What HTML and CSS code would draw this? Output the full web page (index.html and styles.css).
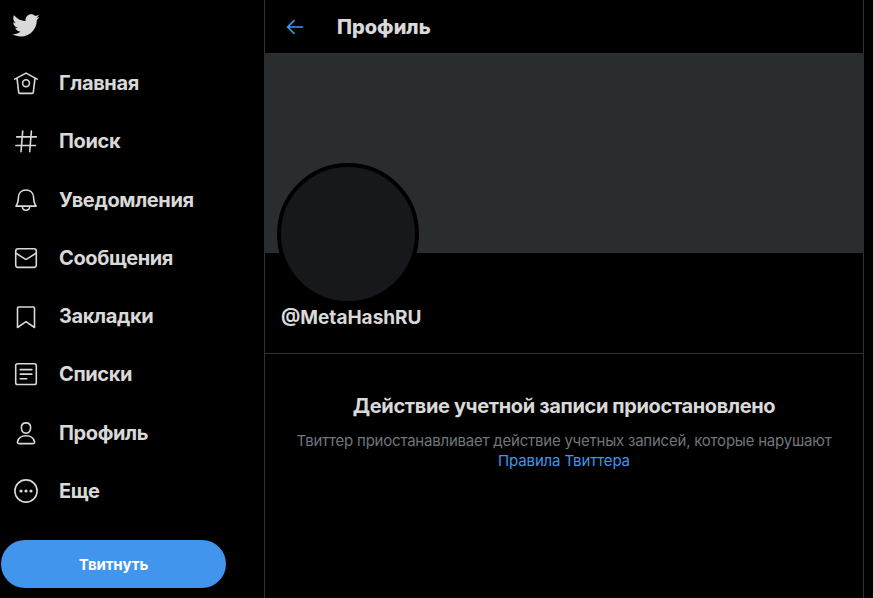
FILE: index.html
```html
<!DOCTYPE html>
<html lang="ru">
<head>
    <meta charset="UTF-8">
    <meta name="viewport" content="width=device-width, initial-scale=1.0">
    <title>Профиль</title>
    <link rel="stylesheet" href="styles.css">
</head>
<body>
    <div class="layout">
        <header class="sidebar">
            <a class="logo" href="#">
                <svg viewBox="0 0 24 24"><path d="M23.643 4.937c-.835.37-1.732.62-2.675.733.962-.576 1.7-1.49 2.048-2.578-.9.534-1.897.922-2.958 1.13-.85-.904-2.06-1.47-3.4-1.47-2.572 0-4.658 2.086-4.658 4.66 0 .364.042.718.12 1.06-3.873-.195-7.304-2.05-9.602-4.868-.4.69-.63 1.49-.63 2.342 0 1.616.823 3.043 2.072 3.878-.764-.025-1.482-.234-2.11-.583v.06c0 2.257 1.605 4.14 3.737 4.568-.392.106-.803.162-1.227.162-.3 0-.593-.028-.877-.082.593 1.85 2.313 3.198 4.352 3.234-1.595 1.25-3.604 1.995-5.786 1.995-.376 0-.747-.022-1.112-.065 2.062 1.323 4.51 2.093 7.14 2.093 8.57 0 13.255-7.098 13.255-13.254 0-.2-.005-.402-.014-.602.91-.658 1.7-1.477 2.323-2.41z"/></svg>
            </a>
            <nav class="menu">
                <a class="menu-item" href="#">
                    <svg viewBox="0 0 26 26"><path d="M1.8 9.1 13 3.1l11.2 6M4 8.2l1.7 14.2q.1 1 1.1 1h12.4q1 0 1.1-1L22 8.2"/><circle cx="13" cy="13.2" r="3.4"/></svg>
                    <span>Главная</span>
                </a>
                <a class="menu-item" href="#">
                    <svg viewBox="0 0 26 26"><path d="M3.7 8.9h19.6M2.9 17.5h19.6M9.7 3 8 23.8M18.4 3l-1.7 20.8"/></svg>
                    <span>Поиск</span>
                </a>
                <a class="menu-item" href="#">
                    <svg viewBox="0 0 26 26"><path d="M2.9 19.1c2.1-2.3 2.3-5.1 2.5-8.5C5.6 5.9 8.6 3 13 3s7.4 2.9 7.6 7.6c.2 3.4.4 6.2 2.5 8.5zM9.3 19.3c.1 2.5 1.6 4 3.7 4s3.6-1.5 3.7-4"/></svg>
                    <span>Уведомления</span>
                </a>
                <a class="menu-item" href="#">
                    <svg viewBox="0 0 26 26"><rect x="2.7" y="3.8" width="20.6" height="18.6" rx="2.3"/><path d="m3 8.3 9.3 5.8q.7.4 1.4 0L23 8.3"/></svg>
                    <span>Сообщения</span>
                </a>
                <a class="menu-item" href="#">
                    <svg viewBox="0 0 26 26"><path d="M4.5 24.5V5.3q0-1.3 1.3-1.3h14.4q1.3 0 1.3 1.3v19.2L13 18.7z"/></svg>
                    <span>Закладки</span>
                </a>
                <a class="menu-item" href="#">
                    <svg viewBox="0 0 26 26"><rect x="2.7" y="2.7" width="20.6" height="20.8" rx="1.8"/><path d="M7.2 8.6h11.7M7.2 13.1h11.7M7.2 17.7h6.5"/></svg>
                    <span>Списки</span>
                </a>
                <a class="menu-item" href="#">
                    <svg viewBox="0 0 26 26"><path d="M13 2.9c2.9 0 4.6 1.7 4.6 4.7 0 3.4-1.8 5.7-4.6 5.7s-4.6-2.3-4.6-5.7c0-3 1.7-4.7 4.6-4.7zM6 23.6c-1.2 0-1.8-.7-1.5-1.9.9-3.7 4.3-5.9 8.5-5.9s7.6 2.2 8.5 5.9c.3 1.2-.3 1.9-1.5 1.9z"/></svg>
                    <span>Профиль</span>
                </a>
                <a class="menu-item" href="#">
                    <svg viewBox="0 0 26 26"><circle cx="13" cy="13" r="11.1"/><g class="dots"><circle cx="8" cy="13" r="1.6"/><circle cx="13" cy="13" r="1.6"/><circle cx="18" cy="13" r="1.6"/></g></svg>
                    <span>Еще</span>
                </a>
            </nav>
            <button class="tweet-button">Твитнуть</button>
        </header>

        <main class="content">
            <div class="topbar">
                <svg class="back" viewBox="0 0 18 18"><path d="M16.5 9H1.8M8 2.7 1.7 9 8 15.3"/></svg>
                <h2>Профиль</h2>
            </div>
            <div class="cover"></div>
            <div class="user">
                <div class="avatar"></div>
                <div class="username">@MetaHashRU</div>
            </div>
            <div class="message">
                <h3>Действие учетной записи приостановлено</h3>
                <p>Твиттер приостанавливает действие учетных записей, которые нарушают <a href="#">Правила Твиттера</a></p>
            </div>
        </main>
    </div>
</body>
</html>
```
FILE: styles.css
```css
* {
    box-sizing: border-box;
}
body {
    margin: 0;
    background-color: #000;
    color: #d9d9d9;
    font-family: Inter, "Liberation Sans", sans-serif;
    overflow: hidden;
}
a {
    color: inherit;
    text-decoration: none;
}
h2, h3, p {
    margin: 0;
}
.layout {
    display: flex;
    height: 598px;
}
.sidebar {
    width: 264px;
    flex-shrink: 0;
}
.logo {
    display: block;
    height: 54px;
    padding: 11px 0 0 11px;
}
.logo svg {
    display: block;
    width: 29px;
    height: 29px;
    fill: #d9d9d9;
}
.menu-item {
    display: flex;
    align-items: center;
    gap: 20px;
    height: 58.25px;
    padding-left: 13px;
    font-size: 20px;
    font-weight: 700;
    letter-spacing: -0.38px;
}
.menu-item svg {
    width: 26px;
    height: 26px;
    fill: none;
    stroke: #d9d9d9;
    stroke-width: 1.6;
    stroke-linejoin: round;
    stroke-linecap: round;
}
.menu-item .dots {
    fill: #d9d9d9;
    stroke: none;
}
.tweet-button {
    display: block;
    width: 225px;
    height: 48px;
    margin: 20px 0 0 1px;
    border: 0;
    border-radius: 24px;
    background-color: #4195ed;
    color: #fff;
    font-family: inherit;
    font-size: 15px;
    font-weight: 700;
    letter-spacing: -0.1px;
}
.content {
    width: 600px;
    border-left: 1px solid #2f3336;
    border-right: 1px solid #2f3336;
}
.topbar {
    display: flex;
    align-items: center;
    gap: 33px;
    height: 53px;
    padding-left: 21px;
}
.back {
    width: 18px;
    height: 18px;
    fill: none;
    stroke: #4195ed;
    stroke-width: 1.7;
    stroke-linecap: round;
}
.topbar h2 {
    font-size: 20px;
    font-weight: 800;
}
.cover {
    height: 200px;
    margin: 0 -1px;
    background-color: #2a2d2f;
}
.user {
    display: flow-root;
    height: 101px;
    padding-left: 12px;
    border-bottom: 1px solid #2f3336;
}
.avatar {
    width: 142px;
    height: 142px;
    margin-top: -90px;
    border: 4px solid #000;
    border-radius: 50%;
    background-color: #17181c;
}
.username {
    padding-left: 4px;
    font-size: 19px;
    font-weight: 700;
    line-height: 26px;
}
.message {
    padding: 40px 20px 0;
    text-align: center;
}
.message h3 {
    font-size: 20px;
    font-weight: 700;
    line-height: 24px;
    letter-spacing: -0.36px;
    white-space: nowrap;
}
.message p {
    padding-top: 13px;
    color: #6e767d;
    font-size: 15px;
    line-height: 20px;
    letter-spacing: -0.22px;
}
.message a {
    color: #4195ed;
    letter-spacing: -0.15px;
}
```
